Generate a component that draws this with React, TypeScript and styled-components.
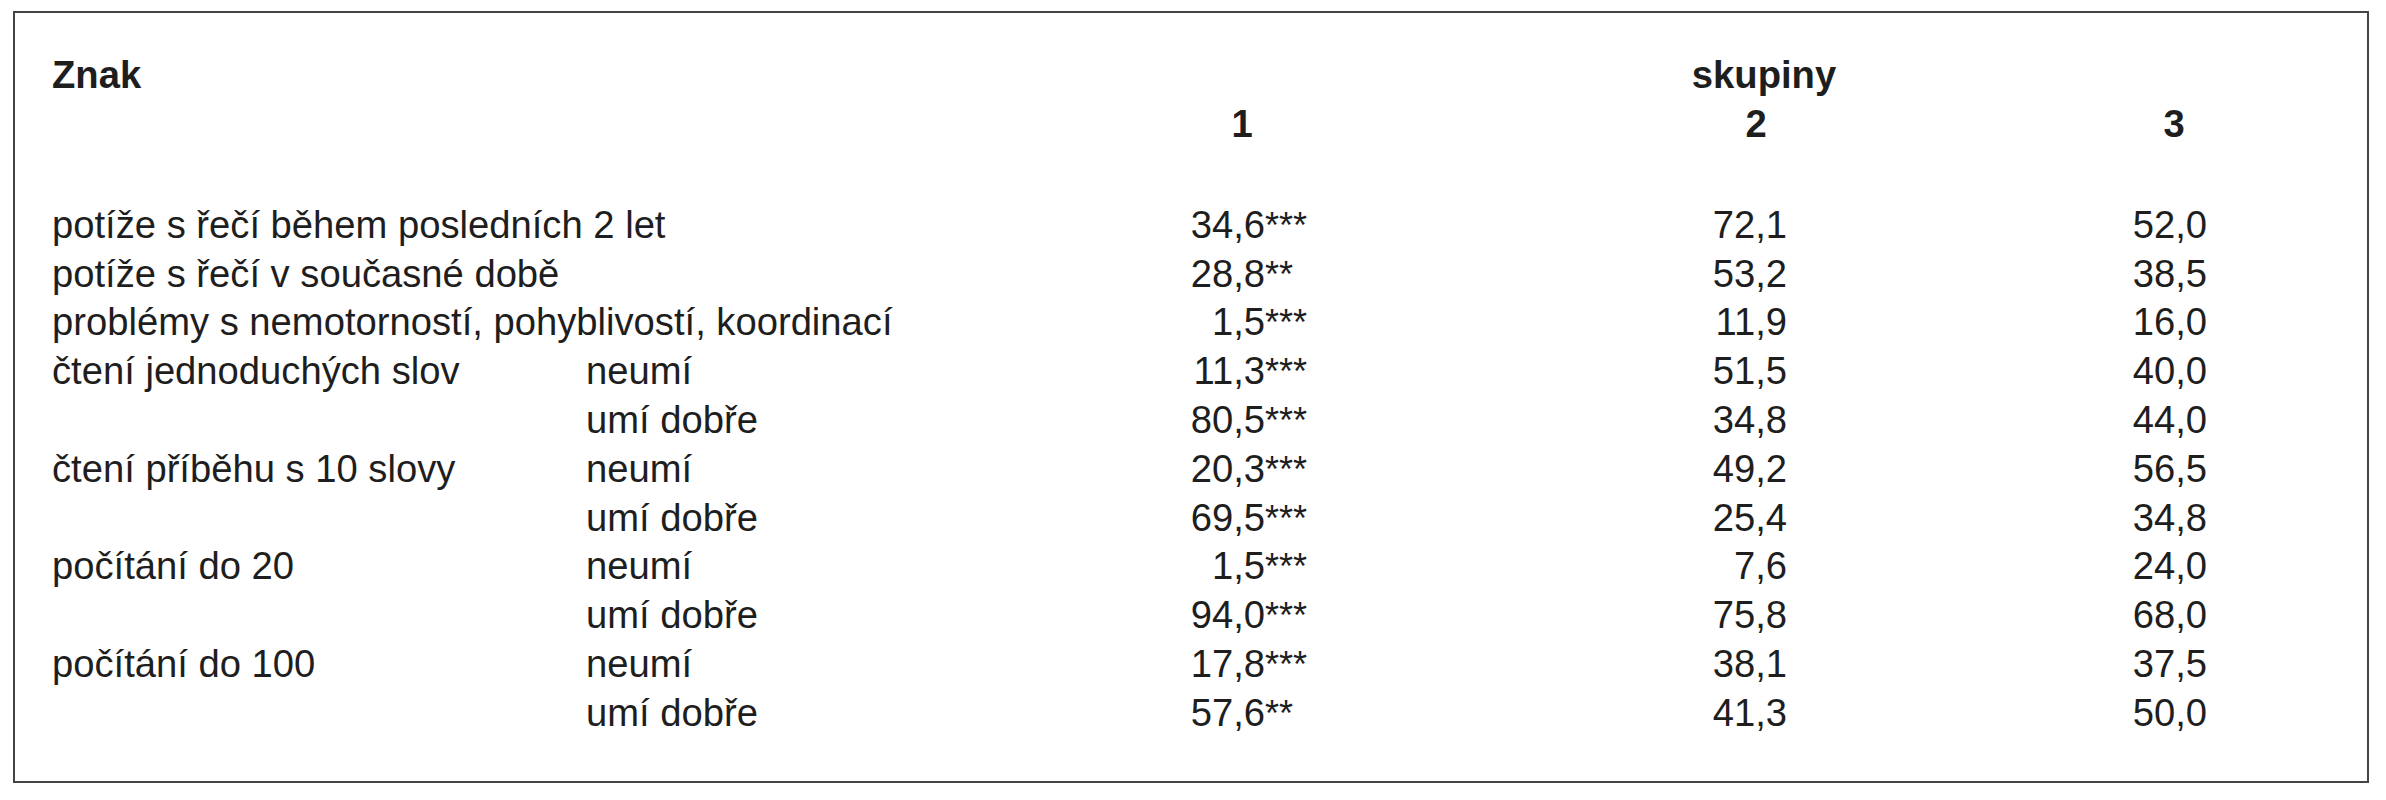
import styled, { createGlobalStyle } from 'styled-components';

const GlobalStyle = createGlobalStyle`
    html, body {
        margin: 0;
        padding: 0;
        background: #ffffff;
    }
    body {
        font-family: "Liberation Sans", Arial, sans-serif;
        color: #1e1e1e;
    }
`;

// Rámeček kolem celé tabulky
const Frame = styled.div`
    box-sizing: border-box;
    margin: 11px 0 0 13px;
    width: 2356px;
    height: 772px;
    border: 2px solid #444444;
    padding: 38px 0 0 37px;
`;

const Grid = styled.div`
    display: grid;
    grid-template-columns: 534px 553px 200px 310px 200px 220px 200px 1fr;
    grid-template-rows: 48.8px 51.5px 49.5px;
    grid-auto-rows: 48.8px;
    font-size: 38.2px;
    line-height: 48.8px;
    white-space: nowrap;
`;

const Cell = styled.div<{ $col: number; $span?: number; $row: number }>`
    grid-column: ${(p) => p.$col} / span ${(p) => p.$span ?? 1};
    grid-row: ${(p) => p.$row};
`;

// Hlavička – posun středu textu doprava přes $nudge
const HeadCell = styled(Cell)<{ $center?: boolean; $nudge?: number }>`
    font-weight: bold;
    text-align: ${(p) => (p.$center ? 'center' : 'left')};
    padding-left: ${(p) => (p.$nudge ?? 0) * 2}px;
`;

const FirstValue = styled(Cell)`
    padding-left: 50px;
`;

const ValueCell = styled(Cell)`
    text-align: center;
`;

const NumBox = styled.span`
    display: inline-block;
    width: 76px;
    text-align: right;
`;

const Stars = styled.span`
    font-size: 36px;
`;

type Row = {
    label?: string;
    sub?: string;
    v1: string;
    stars: string;
    v2: string;
    v3: string;
};

const rows: Row[] = [
    { label: 'potíže s řečí během posledních 2 let', v1: '34,6', stars: '***', v2: '72,1', v3: '52,0' },
    { label: 'potíže s řečí v současné době', v1: '28,8', stars: '**', v2: '53,2', v3: '38,5' },
    { label: 'problémy s nemotorností, pohyblivostí, koordinací', v1: '1,5', stars: '***', v2: '11,9', v3: '16,0' },
    { label: 'čtení jednoduchých slov', sub: 'neumí', v1: '11,3', stars: '***', v2: '51,5', v3: '40,0' },
    { sub: 'umí dobře', v1: '80,5', stars: '***', v2: '34,8', v3: '44,0' },
    { label: 'čtení příběhu s 10 slovy', sub: 'neumí', v1: '20,3', stars: '***', v2: '49,2', v3: '56,5' },
    { sub: 'umí dobře', v1: '69,5', stars: '***', v2: '25,4', v3: '34,8' },
    { label: 'počítání do 20', sub: 'neumí', v1: '1,5', stars: '***', v2: '7,6', v3: '24,0' },
    { sub: 'umí dobře', v1: '94,0', stars: '***', v2: '75,8', v3: '68,0' },
    { label: 'počítání do 100', sub: 'neumí', v1: '17,8', stars: '***', v2: '38,1', v3: '37,5' },
    { sub: 'umí dobře', v1: '57,6', stars: '**', v2: '41,3', v3: '50,0' },
];

const App = () => {
    return (
        <>
            <GlobalStyle />
            <Frame>
                <Grid>
                    <HeadCell $col={1} $row={1}>Znak</HeadCell>
                    <HeadCell $col={5} $row={1} $center $nudge={15}>skupiny</HeadCell>
                    <HeadCell $col={3} $row={2} $center $nudge={3}>1</HeadCell>
                    <HeadCell $col={5} $row={2} $center $nudge={7}>2</HeadCell>
                    <HeadCell $col={7} $row={2} $center $nudge={5}>3</HeadCell>

                    {rows.map((r, i) => {
                        const row = i + 4;
                        return [
                            r.label && (
                                <Cell key={`l${i}`} $col={1} $span={r.sub ? 1 : 2} $row={row}>
                                    {r.label}
                                </Cell>
                            ),
                            r.sub && (
                                <Cell key={`s${i}`} $col={2} $row={row}>
                                    {r.sub}
                                </Cell>
                            ),
                            <FirstValue key={`a${i}`} $col={3} $span={2} $row={row}>
                                <NumBox>{r.v1}</NumBox>
                                <Stars>{r.stars}</Stars>
                            </FirstValue>,
                            <ValueCell key={`b${i}`} $col={5} $row={row}>
                                <NumBox>{r.v2}</NumBox>
                            </ValueCell>,
                            <ValueCell key={`c${i}`} $col={7} $row={row}>
                                <NumBox>{r.v3}</NumBox>
                            </ValueCell>,
                        ];
                    })}
                </Grid>
            </Frame>
        </>
    );
};

export default App;
